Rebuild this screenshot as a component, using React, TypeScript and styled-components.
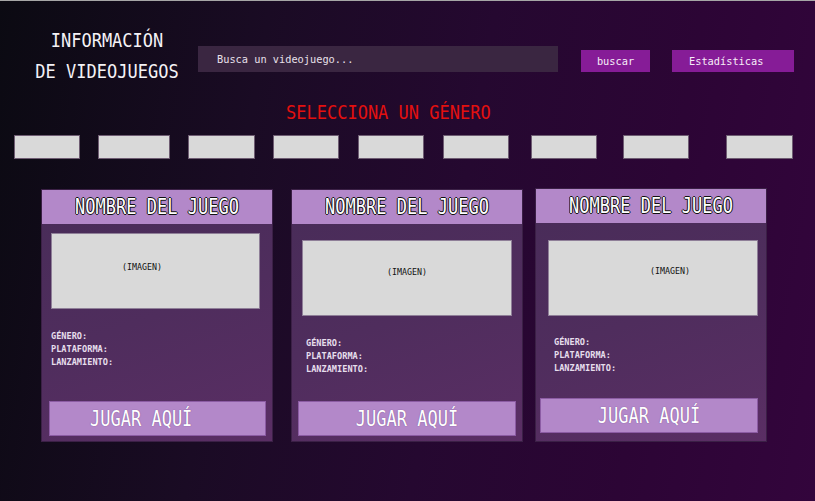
import React from "react";
import styled, { createGlobalStyle } from "styled-components";

const GlobalStyle = createGlobalStyle`
  html, body {
    margin: 0;
    padding: 0;
    background: #0c0a14;
  }
  body {
    font-family: "DejaVu Sans Mono", "Liberation Mono", monospace;
  }
`;

const Page = styled.div`
  width: 815px;
  height: 501px;
  box-sizing: border-box;
  border-top: 1px solid #a6a6a6;
  overflow: hidden;
  display: flex;
  flex-direction: column;
  background: linear-gradient(100deg, #0b0a12 0%, #1a0b24 30%, #250830 55%, #2c0535 78%, #33053c 100%);
  font-family: "DejaVu Sans Mono", "Liberation Mono", monospace;
`;

const TopBar = styled.header`
  display: flex;
  align-items: flex-start;
  padding: 28px 0 0 34px;
`;

const Title = styled.h1`
  margin: 0;
  width: 146px;
  text-align: center;
  font-size: 17px;
  font-weight: normal;
  line-height: 27px;
  color: #f4f2f6;
  transform: scaleY(1.18);
  white-space: nowrap;
`;

const SearchBox = styled.div`
  margin: 17px 0 0 18px;
  width: 360px;
  height: 26px;
  box-sizing: border-box;
  padding-left: 19px;
  display: flex;
  align-items: center;
  background: #3a2641;
  color: #e8e0ea;
  font-size: 10.3px;
`;

const ActionButton = styled.button<{ $w: number; $ml: number; $pl?: number }>`
  margin: 21px 0 0 ${(p) => p.$ml}px;
  width: ${(p) => p.$w}px;
  height: 22px;
  box-sizing: border-box;
  border: none;
  padding: 0 0 0 ${(p) => p.$pl ?? 0}px;
  background: #861c97;
  color: #f6eef8;
  font-family: inherit;
  font-size: 10.3px;
  display: flex;
  align-items: center;
  justify-content: ${(p) => (p.$pl ? "flex-start" : "center")};
`;

const SectionTitle = styled.h2`
  margin: 19px 0 0 286px;
  font-size: 17px;
  font-weight: normal;
  line-height: 20px;
  color: #e3100f;
  transform: scaleY(1.13);
  white-space: nowrap;
`;

const GenreRow = styled.div`
  display: flex;
  margin-top: 13px;
`;

const GenreChip = styled.div<{ $w: number; $ml: number }>`
  width: ${(p) => p.$w}px;
  margin-left: ${(p) => p.$ml}px;
  height: 24px;
  box-sizing: border-box;
  background: #d9d9d9;
  border: 1px solid #6e5c72;
`;

const CardRow = styled.div`
  display: flex;
  align-items: flex-start;
  margin-top: 30px;
`;

const Card = styled.article<{ $ml: number; $mt: number; $h: number }>`
  margin: ${(p) => p.$mt}px 0 0 ${(p) => p.$ml}px;
  width: 232px;
  height: ${(p) => p.$h}px;
  box-sizing: border-box;
  border: 1px solid #3b2046;
  background: linear-gradient(160deg, #482c58 0%, #4f2d5d 50%, #5a2e64 100%);
  display: flex;
  flex-direction: column;
`;

const CardHeader = styled.div`
  height: 34px;
  flex: none;
  background: #b388c9;
  display: flex;
  align-items: center;
  justify-content: center;
  font-size: 17px;
  color: #ffffff;
  text-shadow: -1px 0 0 #111, 1px 0 0 #111, 0 -1px 0 #111, 0 1px 0 #111;
  white-space: nowrap;
`;

const Tall = styled.span`
  display: inline-block;
  transform: scaleY(1.2);
`;

const ImageBox = styled.div<{ $ml: number; $mt: number; $w: number; $tx: number; $ty: number }>`
  margin: ${(p) => p.$mt}px 0 0 ${(p) => p.$ml}px;
  width: ${(p) => p.$w}px;
  height: 76px;
  flex: none;
  box-sizing: border-box;
  background: #d9d9d9;
  border: 1px solid #8f7f98;
  padding: ${(p) => p.$ty}px 0 0 ${(p) => p.$tx}px;
  font-size: 8.3px;
  line-height: 10px;
  color: #111;
`;

const InfoList = styled.ul<{ $pl: number; $mt: number }>`
  list-style: none;
  margin: ${(p) => p.$mt}px 0 0 0;
  padding: 0 0 0 ${(p) => p.$pl}px;
  font-size: 8.6px;
  line-height: 13px;
  font-weight: bold;
  color: #e6deec;
`;

const InfoItem = styled.li`
  transform: scaleY(1.1);
  transform-origin: left center;
`;

const PlayButton = styled.button<{ $ml: number; $mb: number; $w: number; $tx?: number }>`
  margin: auto 0 ${(p) => p.$mb}px ${(p) => p.$ml}px;
  width: ${(p) => p.$w}px;
  height: 35px;
  flex: none;
  box-sizing: border-box;
  border: 1px solid #8c5ca4;
  background: #b388c9;
  color: #ffffff;
  font-family: inherit;
  font-size: 17px;
  display: flex;
  align-items: center;
  justify-content: ${(p) => (p.$tx ? "flex-start" : "center")};
  padding: 0 0 0 ${(p) => p.$tx ?? 0}px;
  text-shadow: 0 0 1px #6d4485;
`;

const genres = [
  { w: 66, ml: 14 },
  { w: 72, ml: 18 },
  { w: 67, ml: 18 },
  { w: 66, ml: 18 },
  { w: 66, ml: 19 },
  { w: 66, ml: 19 },
  { w: 66, ml: 22 },
  { w: 66, ml: 26 },
  { w: 67, ml: 37 },
];

const cards = [
  { ml: 41, mt: 0, h: 253, img: { ml: 9, mt: 9, w: 209, tx: 70, ty: 28 }, info: { pl: 9, mt: 21 }, btn: { ml: 7, mb: 5, w: 217, tx: 40 } },
  { ml: 18, mt: 0, h: 253, img: { ml: 10, mt: 16, w: 210, tx: 84, ty: 26 }, info: { pl: 14, mt: 21 }, btn: { ml: 6, mb: 5, w: 218 } },
  { ml: 12, mt: -1, h: 254, img: { ml: 12, mt: 17, w: 210, tx: 101, ty: 25 }, info: { pl: 18, mt: 20 }, btn: { ml: 4, mb: 8, w: 218 } },
];

export default function App() {
  return (
    <>
      <GlobalStyle />
      <Page>
        <TopBar>
          <Title>
            INFORMACIÓN
            <br />
            DE VIDEOJUEGOS
          </Title>
          <SearchBox>Busca un videojuego...</SearchBox>
          <ActionButton $w={69} $ml={23}>buscar</ActionButton>
          <ActionButton $w={122} $ml={22} $pl={17}>Estadísticas</ActionButton>
        </TopBar>
        <SectionTitle>SELECCIONA UN GÉNERO</SectionTitle>
        <GenreRow>
          {genres.map((g, i) => (
            <GenreChip key={i} $w={g.w} $ml={g.ml} />
          ))}
        </GenreRow>
        <CardRow>
          {cards.map((c, i) => (
            <Card key={i} $ml={c.ml} $mt={c.mt} $h={c.h}>
              <CardHeader>
                <Tall>NOMBRE DEL JUEGO</Tall>
              </CardHeader>
              <ImageBox $ml={c.img.ml} $mt={c.img.mt} $w={c.img.w} $tx={c.img.tx} $ty={c.img.ty}>
                (IMAGEN)
              </ImageBox>
              <InfoList $pl={c.info.pl} $mt={c.info.mt}>
                <InfoItem>GÉNERO:</InfoItem>
                <InfoItem>PLATAFORMA:</InfoItem>
                <InfoItem>LANZAMIENTO:</InfoItem>
              </InfoList>
              <PlayButton $ml={c.btn.ml} $mb={c.btn.mb} $w={c.btn.w} $tx={c.btn.tx}>
                <Tall>JUGAR AQUÍ</Tall>
              </PlayButton>
            </Card>
          ))}
        </CardRow>
      </Page>
    </>
  );
}
